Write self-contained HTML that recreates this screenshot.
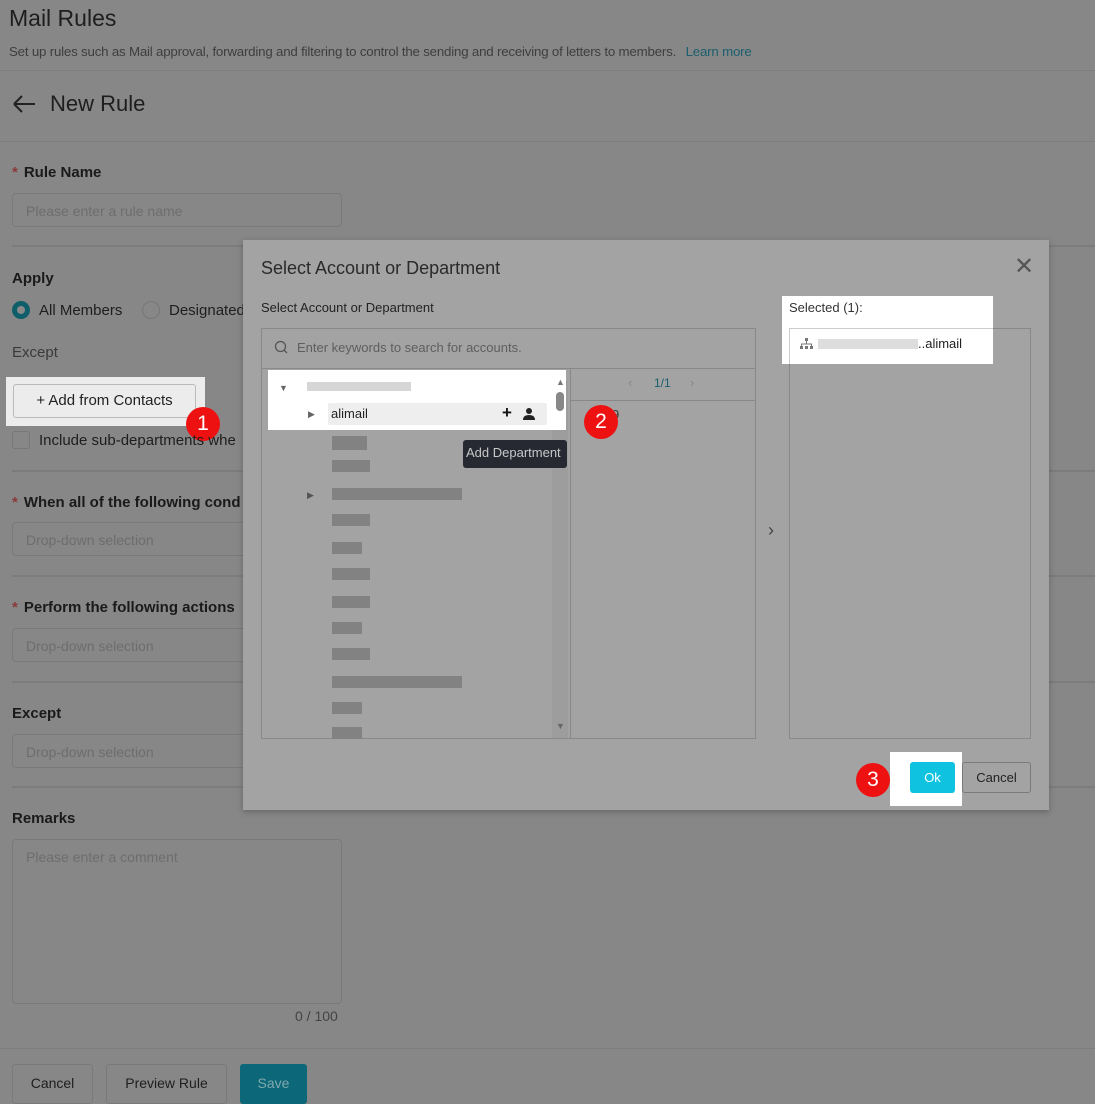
<!DOCTYPE html>
<html><head><meta charset="utf-8"><style>
*{box-sizing:border-box;margin:0;padding:0}
body{width:1095px;height:1098px;overflow:hidden;background:#878787;font-family:"Liberation Sans",sans-serif;position:relative;color:#1e1e1e}
.a{position:absolute}
.lbl{font-weight:bold;font-size:15px;color:#1a1a1a}
.req{color:#8a3a3a;margin-right:6px}
.inp{border:1px solid #7a7a7a;border-radius:4px;height:34px;color:#6d6d6d;font-size:14px;padding:9px 13px}
.hr{height:2px;background:#7c7c7c}
.blur{background:#828282;height:12px}
.btn{border:1px solid #7a7a7a;border-radius:3px;font-size:14px;text-align:center}
.badge{width:34px;height:34px;border-radius:50%;background:#ee1111;color:#fff;font-size:21px;text-align:center;line-height:34px}
</style></head><body>
<div class="a" style="left:9px;top:5px;font-size:23px;color:#1e1e1e">Mail Rules</div>
<div class="a" style="left:9px;top:44px;font-size:13.3px;letter-spacing:-0.2px;color:#3e3e3e">Set up rules such as Mail approval, forwarding and filtering to control the sending and receiving of letters to members. <span style="color:#1a5f6e;margin-left:6px">Learn more</span></div>
<div class="a" style="left:0;top:70px;width:1095px;height:1px;background:#7d7d7d"></div>
<svg class="a" style="left:12px;top:94px" width="24" height="20"><path d="M2 10H23M2 10L10 2M2 10L10 18" stroke="#222" stroke-width="2" fill="none"/></svg>
<div class="a" style="left:50px;top:91px;font-size:22px;color:#1e1e1e">New Rule</div>
<div class="a" style="left:0;top:141px;width:1095px;height:1px;background:#7d7d7d"></div>
<div class="a lbl" style="left:12px;top:164px"><span class="req">*</span>Rule Name</div>
<div class="a inp" style="left:12px;top:193px;width:330px">Please enter a rule name</div>
<div class="a hr" style="left:12px;top:245px;width:1083px"></div>
<div class="a lbl" style="left:12px;top:270px">Apply</div>
<div class="a" style="left:12px;top:301px;width:18px;height:18px;border-radius:50%;border:5px solid #0e5f6a;background:#8a8a8a"></div>
<div class="a" style="left:39px;top:302px;font-size:15px">All Members</div>
<div class="a" style="left:142px;top:301px;width:18px;height:18px;border-radius:50%;border:1px solid #777"></div>
<div class="a" style="left:169px;top:302px;font-size:15px">Designated</div>
<div class="a" style="left:12px;top:344px;font-size:15px;color:#3a3a3a">Except</div>
<div class="a" style="left:6px;top:377px;width:199px;height:49px;background:#ececec"></div>
<div class="a btn" style="left:13px;top:384px;width:183px;height:34px;line-height:32px;font-size:15px;border-color:#bbb;color:#222">+ Add from Contacts</div>
<div class="a badge" style="left:186px;top:407px">1</div>
<div class="a" style="left:12px;top:431px;width:18px;height:18px;border:1px solid #777;border-radius:3px"></div>
<div class="a" style="left:39px;top:432px;font-size:15px">Include sub-departments whe</div>
<div class="a hr" style="left:12px;top:470px;width:1083px"></div>
<div class="a lbl" style="left:12px;top:494px"><span class="req">*</span>When all of the following cond</div>
<div class="a inp" style="left:12px;top:522px;width:240px">Drop-down selection</div>
<div class="a hr" style="left:12px;top:575px;width:1083px"></div>
<div class="a lbl" style="left:12px;top:599px"><span class="req">*</span>Perform the following actions</div>
<div class="a inp" style="left:12px;top:628px;width:240px">Drop-down selection</div>
<div class="a hr" style="left:12px;top:681px;width:1083px"></div>
<div class="a lbl" style="left:12px;top:705px">Except</div>
<div class="a inp" style="left:12px;top:734px;width:240px">Drop-down selection</div>
<div class="a hr" style="left:12px;top:786px;width:1083px"></div>
<div class="a lbl" style="left:12px;top:810px">Remarks</div>
<div class="a inp" style="left:12px;top:839px;width:330px;height:165px">Please enter a comment</div>
<div class="a" style="left:295px;top:1008px;font-size:14px;color:#444">0 / 100</div>
<div class="a" style="left:0;top:1048px;width:1095px;height:1px;background:#7d7d7d"></div>
<div class="a btn" style="left:12px;top:1064px;width:81px;height:40px;line-height:36px">Cancel</div>
<div class="a btn" style="left:106px;top:1064px;width:121px;height:40px;line-height:36px">Preview Rule</div>
<div class="a btn" style="left:240px;top:1064px;width:67px;height:40px;line-height:36px;background:#0c6878;border-color:#0c6878;color:#7fa7ad">Save</div>

<div class="a" style="left:243px;top:240px;width:806px;height:570px;background:#a3a3a3;box-shadow:0 2px 6px rgba(0,0,0,.25)"></div>
<div class="a" style="left:261px;top:258px;font-size:18px;color:#2a2a2a">Select Account or Department</div>
<div class="a" style="left:1014px;top:252px;font-size:24px;color:#555">&#x2715;</div>
<div class="a" style="left:261px;top:300px;font-size:13px;color:#222">Select Account or Department</div>
<div class="a" style="left:261px;top:328px;width:495px;height:411px;border:1px solid #888"></div>
<div class="a" style="left:262px;top:368px;width:493px;height:1px;background:#888"></div>
<svg class="a" style="left:274px;top:340px" width="14" height="14"><circle cx="6.5" cy="6.5" r="5" stroke="#555" stroke-width="1.3" fill="none"/><line x1="10" y1="10" x2="13" y2="13" stroke="#555" stroke-width="1.3"/></svg>
<div class="a" style="left:297px;top:340px;font-size:13px;color:#5e5e5e">Enter keywords to search for accounts.</div>
<div class="a" style="left:570px;top:369px;width:1px;height:370px;background:#888"></div>
<div class="a" style="left:571px;top:400px;width:184px;height:1px;background:#888"></div>
<div class="a" style="left:628px;top:375px;font-size:13px;color:#888">&lsaquo;</div>
<div class="a" style="left:654px;top:376px;font-size:12px;color:#1a5f6e">1/1</div>
<div class="a" style="left:690px;top:375px;font-size:13px;color:#888">&rsaquo;</div>
<div class="a" style="left:612px;top:407px;font-size:13px;color:#333">9</div>
<div class="a" style="left:552px;top:380px;width:16px;height:358px;background:#9d9d9d"></div>
<div class="a" style="left:768px;top:520px;font-size:18px;color:#444">&rsaquo;</div>
<div class="a blur" style="left:332px;top:436px;width:35px;height:14px"></div>
<div class="a blur" style="left:332px;top:460px;width:38px"></div>
<div class="a blur" style="left:332px;top:488px;width:130px"></div>
<div class="a" style="left:307px;top:490px;font-size:9px;color:#555">&#9654;</div>
<div class="a blur" style="left:332px;top:514px;width:38px"></div>
<div class="a blur" style="left:332px;top:542px;width:30px"></div>
<div class="a blur" style="left:332px;top:568px;width:38px"></div>
<div class="a blur" style="left:332px;top:596px;width:38px"></div>
<div class="a blur" style="left:332px;top:622px;width:30px"></div>
<div class="a blur" style="left:332px;top:648px;width:38px"></div>
<div class="a blur" style="left:332px;top:676px;width:130px"></div>
<div class="a blur" style="left:332px;top:702px;width:30px"></div>
<div class="a blur" style="left:332px;top:727px;width:30px"></div>
<div class="a" style="left:463px;top:440px;width:104px;height:28px;background:#262932;border-radius:3px;color:#c8c8c8;font-size:13px;line-height:26px;padding-left:3px">Add Department</div>
<div class="a" style="left:268px;top:370px;width:298px;height:60px;background:#fff"></div>
<div class="a" style="left:279px;top:383px;font-size:9px;color:#666">&#9660;</div>
<div class="a" style="left:307px;top:382px;width:104px;height:9px;background:#d6d6d6"></div>
<div class="a" style="left:328px;top:403px;width:219px;height:22px;background:#eee;border-radius:2px"></div>
<div class="a" style="left:308px;top:409px;font-size:9px;color:#666">&#9654;</div>
<div class="a" style="left:331px;top:406px;font-size:13px;color:#222">alimail</div>
<div class="a" style="left:502px;top:403px;font-size:17px;font-weight:bold;color:#111">+</div>
<svg class="a" style="left:522px;top:407px" width="14" height="14"><circle cx="7" cy="4" r="3" fill="#222"/><path d="M1 13 Q1 8 7 8 Q13 8 13 13Z" fill="#222"/></svg>
<div class="a" style="left:556px;top:377px;font-size:9px;color:#777">&#9650;</div>
<div class="a" style="left:556px;top:392px;width:8px;height:19px;border-radius:4px;background:#888"></div>
<div class="a" style="left:556px;top:721px;font-size:9px;color:#666">&#9660;</div>
<div class="a badge" style="left:584px;top:405px">2</div>
<div class="a" style="left:789px;top:328px;width:242px;height:411px;border:1px solid #888"></div>
<div class="a" style="left:782px;top:296px;width:211px;height:68px;background:#fff"></div>
<div class="a" style="left:789px;top:300px;font-size:13px;color:#333">Selected (1):</div>
<div class="a" style="left:789px;top:328px;width:204px;height:36px;border:1px solid #ccc;border-right:none;border-bottom:none"></div>
<svg class="a" style="left:800px;top:338px" width="13" height="12"><rect x="5" y="0" width="3" height="3" fill="#777"/><rect x="0" y="8" width="3" height="3" fill="#777"/><rect x="5" y="8" width="3" height="3" fill="#777"/><rect x="10" y="8" width="3" height="3" fill="#777"/><path d="M6.5 3V6M1.5 8V6H11.5V8" stroke="#777" fill="none"/></svg>
<div class="a" style="left:818px;top:339px;width:100px;height:10px;background:#ddd"></div>
<div class="a" style="left:918px;top:336px;font-size:13px;color:#222">..alimail</div>
<div class="a btn" style="left:962px;top:762px;width:69px;height:31px;line-height:29px;font-size:13px;color:#222">Cancel</div>
<div class="a" style="left:890px;top:752px;width:72px;height:54px;background:#fff"></div>
<div class="a" style="left:910px;top:762px;width:45px;height:31px;background:#0ec2e0;border-radius:3px;color:#fff;font-size:13px;text-align:center;line-height:31px">Ok</div>
<div class="a badge" style="left:856px;top:763px">3</div>
</body></html>
